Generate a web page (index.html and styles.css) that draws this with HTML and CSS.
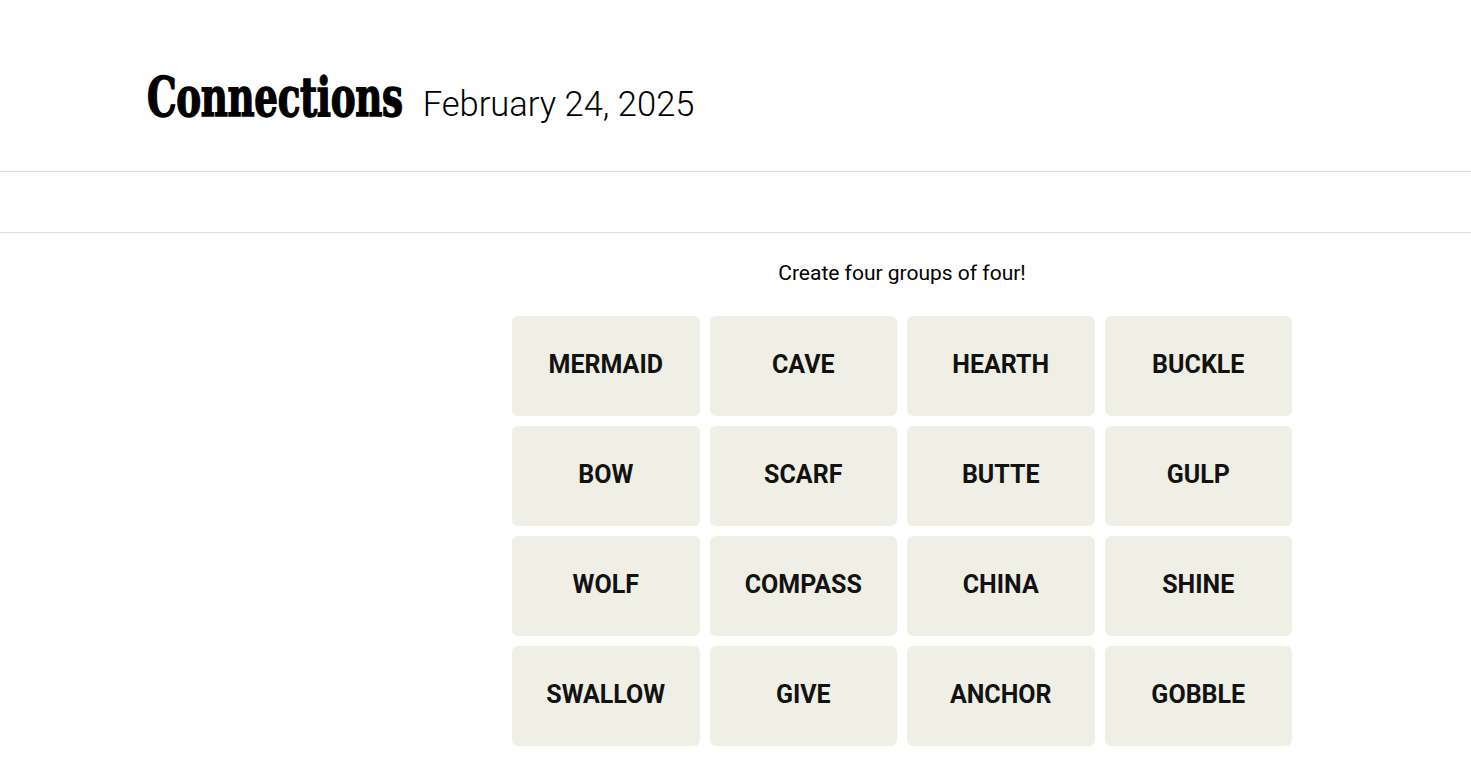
FILE: index.html
```html
<!DOCTYPE html>
<html lang="en">
<head>
<meta charset="utf-8">
<title>Connections</title>
<link rel="stylesheet" href="styles.css">
</head>
<body>
<header class="masthead">
  <h1 class="title">Connections</h1>
  <span class="date">February 24, 2025</span>
</header>
<div class="toolbar"></div>
<main class="game">
  <p class="prompt">Create four groups of four!</p>
  <div class="board">
    <button class="tile">MERMAID</button>
    <button class="tile">CAVE</button>
    <button class="tile">HEARTH</button>
    <button class="tile">BUCKLE</button>
    <button class="tile">BOW</button>
    <button class="tile">SCARF</button>
    <button class="tile">BUTTE</button>
    <button class="tile">GULP</button>
    <button class="tile">WOLF</button>
    <button class="tile">COMPASS</button>
    <button class="tile">CHINA</button>
    <button class="tile">SHINE</button>
    <button class="tile">SWALLOW</button>
    <button class="tile">GIVE</button>
    <button class="tile">ANCHOR</button>
    <button class="tile">GOBBLE</button>
  </div>
</main>
</body>
</html>
```
FILE: styles.css
```css
* { box-sizing: border-box; }
html, body { margin: 0; padding: 0; background: #ffffff; }
body { font-family: Roboto, "Liberation Sans", sans-serif; color: #000; }

.masthead {
  height: 172px;
  display: flex;
  align-items: baseline;
  padding: 67px 0 0 147px;
  border-bottom: 1px solid #dcdcdc;
}
.title {
  margin: 0 -77px 0 0;
  font-family: "DejaVu Serif Condensed", "DejaVu Serif", serif;
  font-weight: 700;
  font-size: 54px;
  letter-spacing: -0.5px;
  line-height: 60px;
  -webkit-text-stroke: 1.4px #000;
  transform: scaleX(0.768);
  transform-origin: left center;
}
.date {
  margin-left: 20px;
  font-family: Roboto, "Liberation Sans", sans-serif;
  font-weight: 300;
  font-size: 34.5px;
}
.toolbar {
  height: 61px;
  border-bottom: 1px solid #dcdcdc;
}
.game {
  display: flex;
  flex-direction: column;
  align-items: center;
  padding-left: 333px;
}
.prompt {
  margin: 27px 0 0;
  font-size: 21px;
  line-height: 26px;
}
.board {
  margin-top: 30px;
  width: 780px;
  display: grid;
  grid-template-columns: repeat(4, 1fr);
  grid-auto-rows: 100px;
  gap: 10px;
}
.tile {
  border: none;
  border-radius: 6px;
  background: #efefe6;
  color: #121212;
  font-family: Roboto, "Liberation Sans", sans-serif;
  font-weight: 700;
  font-size: 25px;
  padding: 0 0 3px;
}
```
